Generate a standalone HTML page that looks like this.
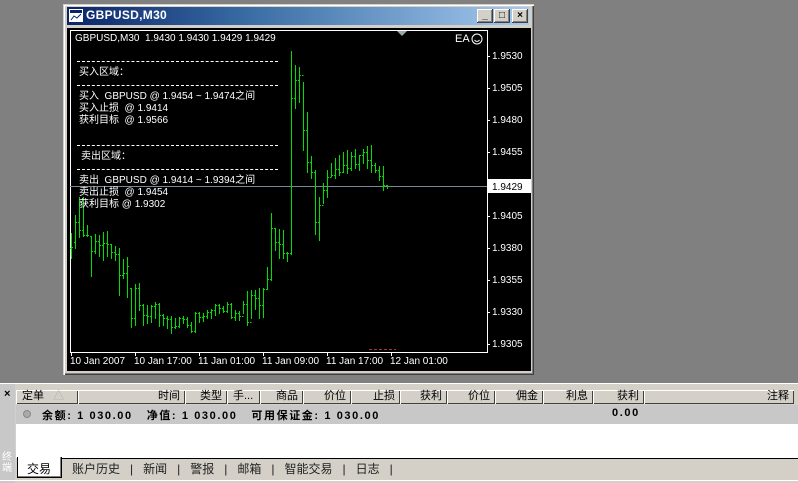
<!DOCTYPE html>
<html><head><meta charset="utf-8"><style>
*{margin:0;padding:0;box-sizing:border-box}
body{width:798px;height:483px;background:#808080;position:relative;overflow:hidden;font-family:"Liberation Sans","Noto Sans CJK SC","WenQuanYi Zen Hei",sans-serif}
.abs{position:absolute}
.win{left:63px;top:4px;width:471px;height:371px;background:#d4d0c8;border-top:1px solid #d4d0c8;border-left:1px solid #d4d0c8;box-shadow:inset 1px 1px 0 #fff,inset -1px -1px 0 #404040,inset -2px -2px 0 #808080}
.title{left:67px;top:7px;width:462px;height:18px;background:linear-gradient(90deg,#0a246a,#3a6ea5 40%,#a6caf0)}
.title span{position:absolute;left:19px;top:1px;color:#fff;font-weight:bold;font-size:12px;letter-spacing:.3px}
.btn{top:9px;width:16px;height:14px;background:#d4d0c8;box-shadow:inset -1px -1px 0 #404040,inset 1px 1px 0 #fff,inset -2px -2px 0 #808080;font-size:10px;font-weight:bold;text-align:center;line-height:13px;color:#000}
.chart{left:67px;top:28px;width:464px;height:343px;background:#000}
.t{position:absolute;color:#fff;font-size:10px;white-space:nowrap;line-height:11px}
.dash{position:absolute;left:77px;width:201px;border-top:1px dashed #fff;height:0}
.ax{position:absolute;left:492px;color:#fff;font-size:10px}
.tl{position:absolute;top:356px;color:#fff;font-size:10px;white-space:nowrap}
.panel{left:0;top:383px;width:798px;height:100px;background:#d4d0c8;border-top:1px solid #fff}
.hd{position:absolute;top:390px;height:14px;background:#d4d0c8;box-shadow:inset 1px 1px 0 #fff,inset -1px -1px 0 #404040;font-size:11px;line-height:13px;text-align:right;padding-right:5px;color:#000;white-space:nowrap}
.tab{position:absolute;top:460px;font-size:12px;color:#000;white-space:nowrap}
</style></head><body>
<div class="abs win"></div>
<div class="abs title"><svg class="abs" style="left:2px;top:2px" width="15" height="14"><rect x="0" y="0" width="14" height="13" fill="#fff"/><rect x="1" y="1" width="12" height="3" fill="#0a246a"/><path d="M2 11 L5 7 L8 9 L12 5" stroke="#0a246a" fill="none"/></svg><span>GBPUSD,M30</span></div>
<div class="abs btn" style="left:477px">_</div>
<div class="abs btn" style="left:494px">□</div>
<div class="abs btn" style="left:512px">×</div>
<div class="abs chart"></div>
<svg class="abs" style="left:0;top:0" width="798" height="483" id="sv">
<rect x="70.5" y="30.5" width="417" height="322" fill="none" stroke="#fff"/>
<line x1="70" y1="186.5" x2="487" y2="186.5" stroke="#778899"/>
<polygon points="397,31 407,31 402,36" fill="#9aa"/>
<circle cx="477" cy="39" r="5" fill="none" stroke="#fff"/>
<path d="M474.5 40 Q477 43 479.5 40" stroke="#fff" fill="none"/>
<g stroke="#fff"><line x1="487" y1="56.5" x2="490" y2="56.5"/><line x1="487" y1="88.5" x2="490" y2="88.5"/><line x1="487" y1="120.5" x2="490" y2="120.5"/><line x1="487" y1="152.5" x2="490" y2="152.5"/><line x1="487" y1="216.5" x2="490" y2="216.5"/><line x1="487" y1="248.5" x2="490" y2="248.5"/><line x1="487" y1="280.5" x2="490" y2="280.5"/><line x1="487" y1="312.5" x2="490" y2="312.5"/><line x1="487" y1="344.5" x2="490" y2="344.5"/>
<line x1="71.5" y1="352" x2="71.5" y2="356"/><line x1="135.5" y1="352" x2="135.5" y2="356"/><line x1="199.5" y1="352" x2="199.5" y2="356"/><line x1="263.5" y1="352" x2="263.5" y2="356"/><line x1="327.5" y1="352" x2="327.5" y2="356"/><line x1="391.5" y1="352" x2="391.5" y2="356"/></g>
<line x1="369" y1="349.5" x2="396" y2="349.5" stroke="#a33" stroke-dasharray="3,2"/>
<rect x="488" y="179" width="43" height="14" fill="#fff"/>
<text x="492" y="190" font-size="10" font-family="Liberation Sans" fill="#000">1.9429</text>
<g id="bars" stroke="#00e000" fill="none"></g>
</svg>
<div class="t" style="left:75px;top:33px">GBPUSD,M30&nbsp; 1.9430 1.9430 1.9429 1.9429</div>
<div class="t" style="left:455px;top:34px;font-size:11px">EA</div>
<div class="dash" style="top:61px"></div>
<div class="t" style="left:79px;top:67px">买入区域：</div>
<div class="dash" style="top:85px"></div>
<div class="t" style="left:79px;top:91px">买入&nbsp; GBPUSD @ 1.9454 ~ 1.9474之间</div>
<div class="t" style="left:79px;top:103px">买入止损&nbsp; @ 1.9414</div>
<div class="t" style="left:79px;top:115px">获利目标&nbsp; @ 1.9566</div>
<div class="dash" style="top:145px"></div>
<div class="t" style="left:81px;top:151px">卖出区域：</div>
<div class="dash" style="top:169px"></div>
<div class="t" style="left:79px;top:175px">卖出&nbsp; GBPUSD @ 1.9414 ~ 1.9394之间</div>
<div class="t" style="left:79px;top:187px">卖出止损&nbsp; @ 1.9454</div>
<div class="t" style="left:79px;top:199px">获利目标 @ 1.9302</div>
<div class="ax" style="top:51px">1.9530</div><div class="ax" style="top:83px">1.9505</div><div class="ax" style="top:115px">1.9480</div><div class="ax" style="top:147px">1.9455</div><div class="ax" style="top:211px">1.9405</div><div class="ax" style="top:243px">1.9380</div><div class="ax" style="top:275px">1.9355</div><div class="ax" style="top:307px">1.9330</div><div class="ax" style="top:339px">1.9305</div>
<div class="tl" style="left:70px">10 Jan 2007</div><div class="tl" style="left:134px">10 Jan 17:00</div><div class="tl" style="left:198px">11 Jan 01:00</div><div class="tl" style="left:262px">11 Jan 09:00</div><div class="tl" style="left:326px">11 Jan 17:00</div><div class="tl" style="left:390px">12 Jan 01:00</div>
<div class="abs panel"></div>
<div class="abs" style="left:0;top:384px;width:15px;height:99px;background:#c8c8c8"></div>
<div class="abs" style="left:4px;top:388px;font-size:11px;font-weight:bold">×</div>
<div class="abs" style="left:2px;top:452px;font-size:10px;color:#fff;width:11px;line-height:11px">终端</div>
<div class="hd" style="left:16px;width:62px;text-align:left;padding-left:6px">定单 &nbsp; <span style="color:#aaa">△</span></div>
<div class="hd" style="left:78px;width:107px">时间</div>
<div class="hd" style="left:185px;width:42px">类型</div>
<div class="hd" style="left:227px;width:33px;text-align:left;padding-left:6px">手...</div>
<div class="hd" style="left:260px;width:43px">商品</div>
<div class="hd" style="left:303px;width:48px">价位</div>
<div class="hd" style="left:351px;width:49px">止损</div>
<div class="hd" style="left:400px;width:47px">获利</div>
<div class="hd" style="left:447px;width:48px">价位</div>
<div class="hd" style="left:495px;width:48px">佣金</div>
<div class="hd" style="left:543px;width:50px">利息</div>
<div class="hd" style="left:593px;width:51px">获利</div>
<div class="hd" style="left:644px;width:150px">注释</div>
<div class="abs" style="left:16px;top:405px;width:782px;height:19px;background:#c8c8c8"></div>
<div class="abs" style="left:23px;top:410px;width:8px;height:8px;border-radius:50%;background:#aaa;border:1px solid #888"></div>
<div class="abs" style="left:42px;top:407px;font-size:11px;font-weight:bold;letter-spacing:1.6px;white-space:nowrap">余额: 1 030.00&nbsp;&nbsp; 净值: 1 030.00&nbsp;&nbsp; 可用保证金: 1 030.00</div>
<div class="abs" style="left:612px;top:407px;font-size:11px;font-weight:bold;letter-spacing:1.6px">0.00</div>
<div class="abs" style="left:16px;top:424px;width:782px;height:34px;background:#fff"></div>
<div class="abs" style="left:62px;top:458px;width:736px;height:1px;background:#000"></div>
<div class="abs" style="left:17px;top:457px;width:45px;height:21px;background:#fff;border:1px solid #000;border-top:none;box-shadow:inset -1px -1px 0 #808080"></div>
<div class="tab" style="left:27px">交易</div>
<div class="tab" style="left:72px;color:#222">账户历史&nbsp;&nbsp; |&nbsp;&nbsp; 新闻&nbsp;&nbsp; |&nbsp;&nbsp; 警报&nbsp;&nbsp; |&nbsp;&nbsp; 邮箱&nbsp;&nbsp; |&nbsp;&nbsp; 智能交易&nbsp;&nbsp; |&nbsp;&nbsp; 日志&nbsp;&nbsp; |</div>
<div class="abs" style="left:0;top:480px;width:798px;height:1px;background:#fff"></div>
<script>
var b=[[233,258,248,247],[215,248,242,222],[197,237,222,230],[197,236,230,235],[225,236,235,235],[236,276,236,251],[234,253,251,241],[235,256,241,245],[232,260,245,243],[231,256,243,244],[244,258,244,252],[246,260,252,254],[248,295,254,275],[259,278,275,273],[257,297,273,266],[288,327,288,318],[284,325,318,288],[283,310,288,305],[304,325,305,315],[305,323,315,316],[305,322,316,306],[302,318,306,304],[303,326,304,315],[314,325,315,318],[316,328,318,319],[316,333,319,327],[318,328,327,326],[317,327,326,318],[316,323,318,319],[317,327,319,325],[322,332,325,331],[312,332,331,313],[312,322,313,317],[313,321,317,316],[310,318,316,312],[309,318,312,310],[304,315,310,305],[304,313,305,308],[306,312,308,311],[302,312,311,304],[303,318,304,317],[310,320,317,313],[311,320,313,316],[301,313,316,304],[291,325,304,322],[290,318,322,295],[290,309,295,298],[288,318,298,305],[288,317,305,289],[267,289,289,279],[213,280,279,228],[228,250,228,242],[229,258,242,244],[230,258,244,253],[252,261,253,253],[51,254,253,98],[65,108,98,80],[67,102,80,75],[82,150,75,130],[112,172,130,162],[156,178,162,172],[170,234,172,222],[197,240,222,205],[183,203,205,190],[170,197,190,177],[163,176,177,175],[158,178,175,169],[155,175,169,172],[152,172,172,165],[150,173,165,168],[152,170,168,156],[149,168,156,164],[155,170,164,155],[149,163,155,152],[146,168,152,160],[145,172,160,165],[163,172,165,170],[166,180,170,176],[166,190,176,185],[185,188,185,186]];
var s='';for(var i=0;i<b.length;i++){var x=71.5+4*i,d=b[i];s+='<line x1="'+x+'" y1="'+d[0]+'" x2="'+x+'" y2="'+(d[1]+1)+'"/><line x1="'+(x-1.5)+'" y1="'+(d[2]+.5)+'" x2="'+x+'" y2="'+(d[2]+.5)+'"/><line x1="'+x+'" y1="'+(d[3]+.5)+'" x2="'+(x+1.5)+'" y2="'+(d[3]+.5)+'"/>';}
document.getElementById('bars').innerHTML=s;
</script>
</body></html>
